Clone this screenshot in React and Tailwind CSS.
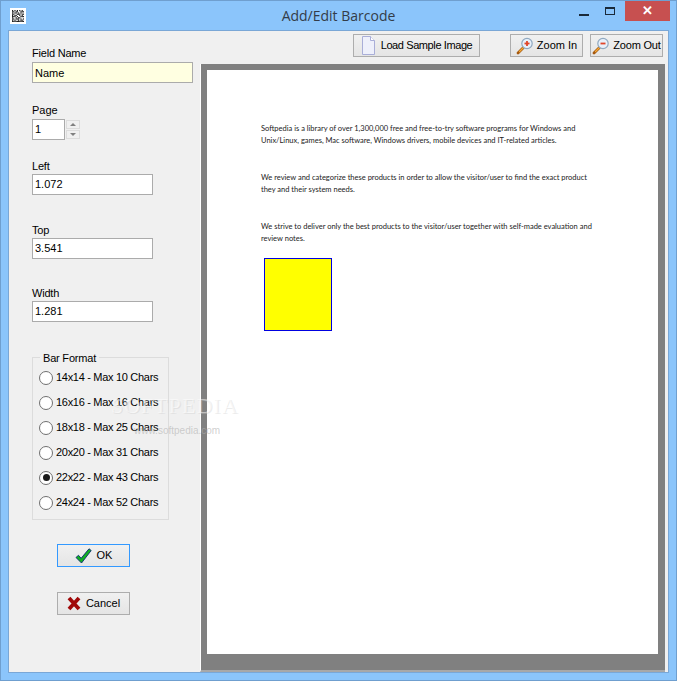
import React from 'react';

const ui = { fontFamily: '"Liberation Sans", Arial, sans-serif' };

const dots = [
  '1010101010', '1101100111', '1011010100', '1100111011', '1011001010',
  '1110100111', '1001011000', '1101110101', '1010010110', '1111111111',
];

const MatrixIcon = () => (
  <svg width="16" height="16" viewBox="0 0 16 16" className="bg-white">
    {dots.map((row, y) =>
      row.split('').map((c, x) =>
        c === '1' ? <rect key={x + '-' + y} x={x * 1.2 + 2} y={y * 1.2 + 2} width="1.2" height="1.2" fill="#222" /> : null
      )
    )}
  </svg>
);

const DocIcon = () => (
  <svg width="15" height="19" viewBox="0 0 15 19" className="shrink-0">
    <path d="M1.5.5h8l4 4v14h-12z" fill="#eef0fb" stroke="#a9aed8" />
    <path d="M9.5.5v4h4" fill="#fff" stroke="#a9aed8" />
  </svg>
);

const Magnifier = ({ plus }) => (
  <svg width="18" height="18" viewBox="0 0 18 18" className="shrink-0">
    <path d="M7.5 10.5L2 16" stroke="#a65a10" strokeWidth="2.8" strokeLinecap="round" />
    <path d="M7.5 10.5L3.5 14.5" stroke="#f5a834" strokeWidth="1.3" strokeLinecap="round" />
    <circle cx="11" cy="6.5" r="5.2" fill="#e8f0fa" stroke="#8fa8c0" strokeWidth="1.2" />
    <path d="M8.5 6.5h5" stroke="#e0452a" strokeWidth="1.8" />
    {plus && <path d="M11 4v5" stroke="#e0452a" strokeWidth="1.8" />}
  </svg>
);

const CheckIcon = () => (
  <svg width="17" height="16" viewBox="0 0 17 16" className="shrink-0">
    <path d="M1 9.5l2.5-2.2 2.6 3L14 .8l2.2 1.7L6.5 15z" fill="#12b020" stroke="#0a2a70" strokeWidth="0.9" />
  </svg>
);

const CrossIcon = () => (
  <svg width="14" height="15" viewBox="0 0 14 15" className="shrink-0">
    <path d="M2 2l10 11M12 2L2 13" stroke="#a00808" strokeWidth="3.8" />
  </svg>
);

const Btn = ({ className = '', children }) => (
  <div className={`h-[23px] flex items-center justify-center whitespace-nowrap border border-[#adadad] bg-gradient-to-b from-[#f0f0f0] to-[#e5e5e5] text-[11px] text-black ${className}`}>
    {children}
  </div>
);

const Field = ({ label, value, className = '' }) => (
  <div className={className}>
    <div className="text-[11px] leading-[14px] tracking-[-0.2px] text-black">{label}</div>
    <div className="w-[121px] h-[21px] mt-[1px] border border-[#ababab] bg-white px-[2px] text-[11px] leading-[19px] text-black">{value}</div>
  </div>
);

const Radio = ({ label, on }) => (
  <div className="h-[25px] flex items-center gap-[3px] text-[11px] tracking-[-0.3px] text-black whitespace-nowrap">
    <div className="w-[14px] h-[14px] shrink-0 rounded-full border border-[#707070] bg-white flex items-center justify-center">
      {on && <div className="w-[7px] h-[7px] rounded-full bg-[#1a1a1a]" />}
    </div>
    <span>{label}</span>
  </div>
);

const formats = [
  '14x14 - Max 10 Chars',
  '16x16 - Max 16 Chars',
  '18x18 - Max 25 Chars',
  '20x20 - Max 31 Chars',
  '22x22 - Max 43 Chars',
  '24x24 - Max 52 Chars',
];

const docFont = { fontFamily: 'Lato, "Open Sans", sans-serif' };

export default function App() {
  return (
    <div className="relative w-[677px] h-[681px] overflow-hidden bg-[#8bc5fb] border border-[#6f9fcf] flex flex-col" style={ui}>
      <div className="h-[29px] shrink-0 flex items-center relative">
        <div className="ml-[9px]"><MatrixIcon /></div>
        <div className="absolute left-0 right-0 top-[5px] text-center leading-[20px] text-[#333c48]" style={{ fontFamily: '"Open Sans", sans-serif', fontSize: '14px' }}>
          Add/Edit Barcode
        </div>
        <div className="ml-auto flex items-start self-start">
          <div className="w-[26px] h-[20px] flex items-end justify-center pb-[5px]">
            <div className="w-[10px] h-[2px] bg-[#1a2a3a]" />
          </div>
          <div className="w-[26px] h-[20px] flex items-center justify-center mr-[2px]">
            <div className="w-[10px] h-[8px] border border-[#1a2a3a] border-t-2" />
          </div>
          <div className="w-[45px] h-[20px] bg-[#c75050] mr-[6px] flex items-center justify-center text-white text-[13px] font-bold">✕</div>
        </div>
      </div>

      <div className="ml-[7px] mr-[7px] h-[643px] bg-[#f0f0f0] border border-[#7aa7d6] flex">
        <div className="w-[191px] pl-[23px] pt-[15px] shrink-0">
          <div className="text-[11px] leading-[14px] tracking-[-0.2px] text-black">Field Name</div>
          <div className="w-[161px] h-[21px] mt-[2px] border border-[#ababab] bg-[#ffffe1] px-[2px] text-[11px] leading-[20px] text-black">Name</div>

          <div className="mt-[20px] text-[11px] leading-[14px] text-black">Page</div>
          <div className="mt-[2px] flex gap-[1px]">
            <div className="w-[33px] h-[21px] border border-[#ababab] bg-white px-[2px] text-[11px] leading-[19px] text-black">1</div>
            <div className="flex flex-col gap-[1px] pt-[1px]">
              <div className="w-[14px] h-[9px] border border-[#dcdcdc] flex items-center justify-center">
                <div className="w-0 h-0 border-x-[3px] border-x-transparent border-b-[3px] border-b-[#808080]" />
              </div>
              <div className="w-[14px] h-[9px] border border-[#dcdcdc] flex items-center justify-center">
                <div className="w-0 h-0 border-x-[3px] border-x-transparent border-t-[3px] border-t-[#808080]" />
              </div>
            </div>
          </div>

          <Field label="Left" value="1.072" className="mt-[19px]" />
          <Field label="Top" value="3.541" className="mt-[28px]" />
          <Field label="Width" value="1.281" className="mt-[27px]" />

          <div className="relative mt-[35px] w-[137px] h-[163px] border border-[#dcdcdc] pt-[7px] pl-[6px]">
            <div className="absolute left-[7px] top-[-7px] bg-[#f0f0f0] px-[3px] text-[11px] leading-[14px] tracking-[-0.2px] text-black">Bar Format</div>
            {formats.map((f, i) => (
              <Radio key={f} label={f} on={i === 4} />
            ))}
          </div>

          <Btn className="mt-[24px] ml-[25px] w-[73px] !border-[#3399ff] gap-[5px]">
            <CheckIcon />
            <span>OK</span>
          </Btn>
          <Btn className="mt-[25px] ml-[25px] w-[73px] gap-[5px]">
            <CrossIcon />
            <span>Cancel</span>
          </Btn>
        </div>

        <div className="flex-1 flex flex-col min-w-0">
          <div className="h-[33px] shrink-0 pt-[3px] flex">
            <Btn className="ml-[153px] w-[127px] gap-[5px]">
              <DocIcon />
              <span className="tracking-[-0.4px]">Load Sample Image</span>
            </Btn>
            <Btn className="ml-[30px] w-[73px] gap-[3px]">
              <Magnifier plus />
              <span>Zoom In</span>
            </Btn>
            <Btn className="ml-[7px] w-[73px] gap-[3px]">
              <Magnifier />
              <span className="tracking-[-0.2px]">Zoom Out</span>
            </Btn>
          </div>

          <div className="w-[465px] h-[608px] border-l border-white bg-[#808080] pl-[6px] pt-[6px] border-b-2 border-b-[#a8a8a8]">
            <div className="w-[451px] h-[584px] bg-white pl-[54px] pt-[53px] text-[#222]" style={docFont}>
              <div className="text-[7.5px] leading-[12px] w-[360px] whitespace-nowrap">
                <p>Softpedia is a library of over 1,300,000 free and free-to-try software programs for Windows and<br />Unix/Linux, games, Mac software, Windows drivers, mobile devices and IT-related articles.</p>
                <p className="mt-[25px]">We review and categorize these products in order to allow the visitor/user to find the exact product<br />they and their system needs.</p>
                <p className="mt-[25px]">We strive to deliver only the best products to the visitor/user together with self-made evaluation and<br />review notes.</p>
              </div>
              <div className="mt-[13px] ml-[3px] w-[68px] h-[73px] bg-[#ffff00] border border-[#0000e0]" />
            </div>
          </div>
        </div>
      </div>

      <div className="absolute left-[110px] top-[392px] text-[22px] leading-[26px] tracking-[1px] text-white/50 pointer-events-none" style={{ fontFamily: '"Liberation Serif", serif', textShadow: '1px 1px 0 rgba(200,200,200,0.35)' }}>
        SOFTPEDIA
      </div>
      <div className="absolute left-[133px] top-[424px] text-[10px] leading-[12px] text-[#b0b0b0]/60 pointer-events-none">
        www.softpedia.com
      </div>
    </div>
  );
}
